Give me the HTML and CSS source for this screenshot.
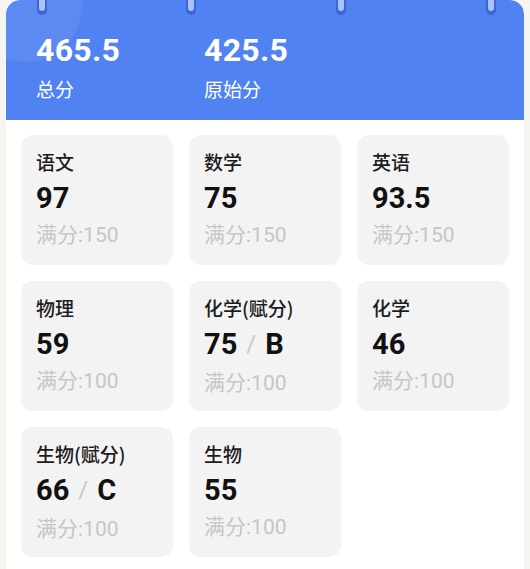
FILE: index.html
```html
<!DOCTYPE html>
<html lang="zh">
<head>
<meta charset="utf-8">
<link rel="stylesheet" href="styles.css">
</head>
<body>
<div class="sheet">
  <header class="head">
    <div class="deco"></div>
    <div class="rings">
      <span class="ring"></span><span class="ring"></span><span class="ring"></span><span class="ring"></span>
    </div>
    <div class="totals">
      <div class="total">
        <div class="tnum">465.5</div>
        <div class="tlabel">总分</div>
      </div>
      <div class="total">
        <div class="tnum">425.5</div>
        <div class="tlabel">原始分</div>
      </div>
    </div>
  </header>
  <div class="grid">
    <div class="card"><div class="name">语文</div><div class="score">97</div><div class="full">满分:150</div></div>
    <div class="card"><div class="name">数学</div><div class="score">75</div><div class="full">满分:150</div></div>
    <div class="card"><div class="name">英语</div><div class="score">93.5</div><div class="full">满分:150</div></div>
    <div class="card"><div class="name">物理</div><div class="score">59</div><div class="full">满分:100</div></div>
    <div class="card"><div class="name">化学(赋分)</div><div class="score">75<span class="sep">/</span>B</div><div class="full">满分:100</div></div>
    <div class="card"><div class="name">化学</div><div class="score">46</div><div class="full">满分:100</div></div>
    <div class="card"><div class="name">生物(赋分)</div><div class="score">66<span class="sep">/</span>C</div><div class="full">满分:100</div></div>
    <div class="card"><div class="name">生物</div><div class="score">55</div><div class="full">满分:100</div></div>
  </div>
</div>
</body>
</html>
```

FILE: styles.css
```css
html, body {
  margin: 0;
  padding: 0;
}
body {
  background: #f6f5f0;
  font-family: "Roboto", "Noto Sans CJK SC", sans-serif;
}
.sheet {
  margin-left: 6px;
  width: 518px;
  height: 569px;
  background: #ffffff;
  border-radius: 14px 14px 0 0;
  overflow: hidden;
}
.head {
  position: relative;
  height: 120px;
  background: #5182f1;
  border-radius: 14px 14px 0 0;
  overflow: hidden;
}
.deco {
  position: absolute;
  left: -38px;
  top: -52px;
  width: 114px;
  height: 114px;
  border-radius: 50%;
  background: rgba(255, 255, 255, 0.07);
}
.rings {
  position: absolute;
  left: 0;
  top: 0;
  width: 100%;
}
.ring {
  position: absolute;
  top: -6px;
  width: 10px;
  height: 21px;
  margin-left: -5px;
  border-radius: 5px;
  background: #3a66d6;
}
.ring::after {
  content: "";
  position: absolute;
  left: 2px;
  top: 0;
  width: 6px;
  height: 17px;
  border-radius: 3px;
  background: #a9c2f7;
}
.ring:nth-child(1) { left: 36px; }
.ring:nth-child(2) { left: 185px; }
.ring:nth-child(3) { left: 335px; }
.ring:nth-child(4) { left: 485px; }
.totals {
  position: relative;
  display: flex;
  padding: 30px 0 0 30px;
  color: #ffffff;
}
.total {
  width: 168px;
}
.tnum {
  font-size: 32px;
  font-weight: 700;
  line-height: 40px;
  letter-spacing: 0.3px;
}
.tlabel {
  margin-top: 6px;
  font-family: "Noto Sans CJK SC", sans-serif;
  font-size: 19px;
  line-height: 26px;
}
.grid {
  display: grid;
  grid-template-columns: repeat(3, 152px);
  gap: 16px;
  padding: 15px;
}
.card {
  height: 130px;
  box-sizing: border-box;
  background: #f3f3f3;
  border-radius: 12px;
  padding: 13px 14px 0 15px;
}
.name {
  font-family: "Noto Sans CJK SC", sans-serif;
  font-size: 19px;
  font-weight: 500;
  line-height: 28px;
  color: #1c1c1c;
}
.score {
  margin-top: 4px;
  font-size: 29px;
  font-weight: 700;
  line-height: 36px;
  color: #111111;
}
.sep {
  font-weight: 400;
  color: #c9c9c9;
  font-size: 24px;
  margin: 0 9px;
  position: relative;
  top: -2px;
}
.full {
  margin-top: 5px;
  font-size: 21px;
  line-height: 28px;
  color: #c6c6c6;
}
```
